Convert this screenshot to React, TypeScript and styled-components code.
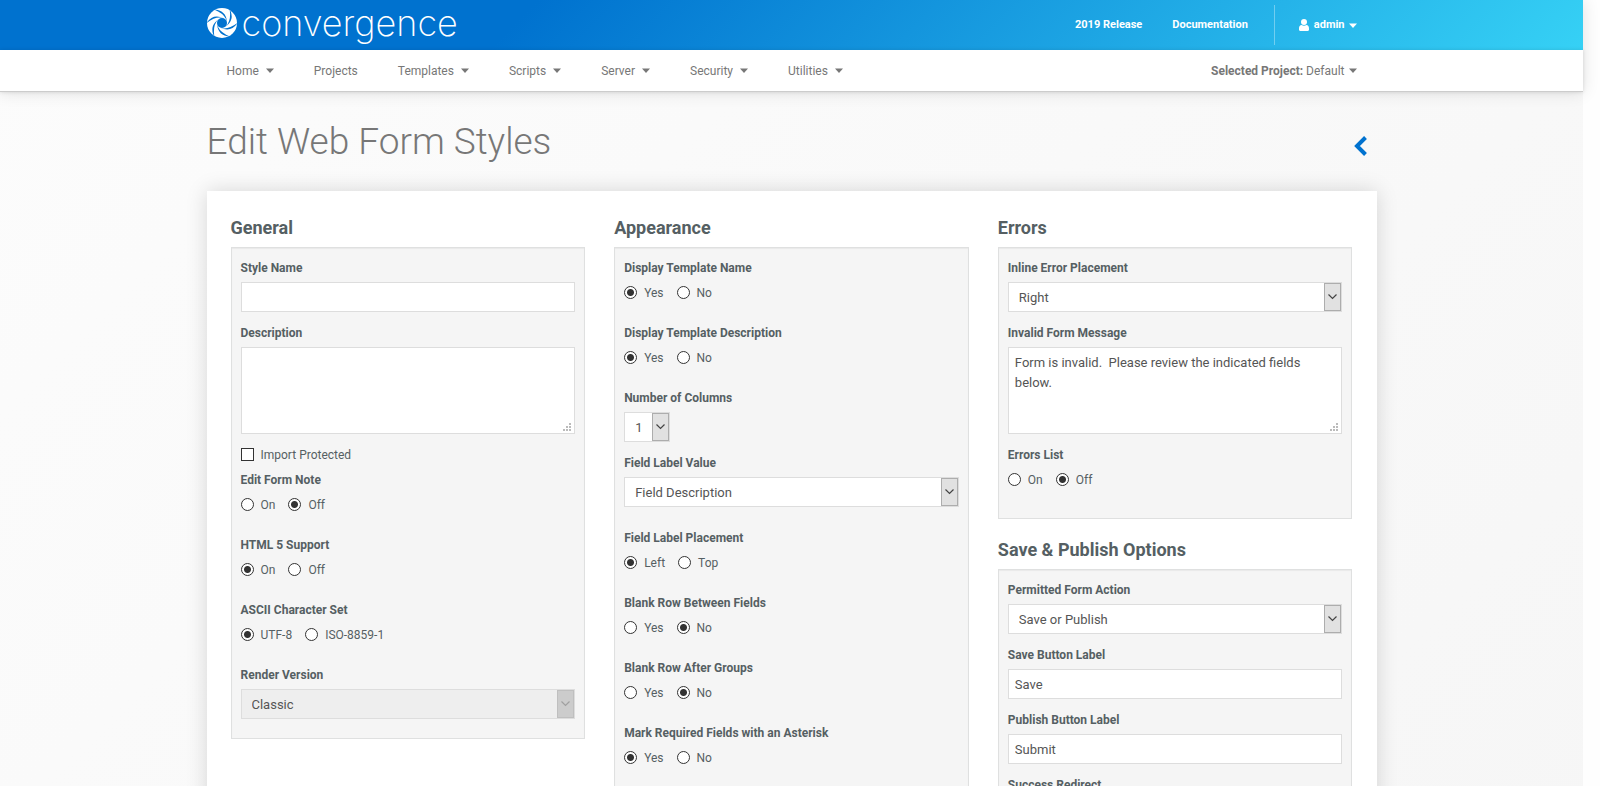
import React, { useId } from 'react';
import styled, { createGlobalStyle } from 'styled-components';

const GlobalStyle = createGlobalStyle`
  *, *::before, *::after { box-sizing: border-box; }
  body {
    margin: 0;
    font-family: Roboto, 'Liberation Sans', sans-serif;
    font-size: 12px;
    line-height: 20px;
    color: #555f63;
  }
  html, body, #root { height: 100%; }
`;

const Viewport = styled.div`
  height: 100vh;
  padding-right: 17px;
  overflow: hidden;
  background: #fefefe;
`;

const Page = styled.div`
  min-height: 100%;
  background: linear-gradient(135deg, #fcfcfc 0%, #f6f6f6 100%);
`;

const Container = styled.div`
  width: 100%;
  max-width: 1170px;
  margin: 0 auto;
`;

const Masthead = styled.header`
  position: relative;
  box-shadow: 0 0 16px rgba(0, 0, 0, 0.12);
`;

const BrandBar = styled.div`
  height: 50px;
  background: linear-gradient(135deg, #0072cf 0%, #0072cf 33%, #36d1f5 100%);
`;

const BrandRow = styled(Container)`
  display: flex;
  align-items: center;
  justify-content: space-between;
  height: 50px;
`;

const Brand = styled.a`
  display: flex;
  align-items: center;
  gap: 5px;
  margin-bottom: 4px;
  color: #fff;
  font-family: Inter, Roboto, sans-serif;
  font-size: 36px;
  font-weight: 200;
  line-height: 40px;
  text-decoration: none;
`;

const AccountLinks = styled.nav`
  display: flex;
  align-items: center;
  padding-right: 20px;
`;

const AccountLink = styled.a`
  margin-right: 30px;
  color: #fff;
  font-size: 11px;
  font-weight: 700;
  text-decoration: none;
`;

const AccountButton = styled.button`
  display: flex;
  align-items: center;
  gap: 4px;
  height: 40px;
  padding: 0 0 0 24px;
  margin-left: -4px;
  border: 0;
  border-left: 1px solid rgba(255, 255, 255, 0.35);
  background: none;
  color: #fff;
  font: 700 11px/20px Roboto, sans-serif;
`;

const NavBar = styled.div`
  height: 42px;
  border-bottom: 1px solid #ccc;
  background: #fff;
  box-shadow: 0 0 4px rgba(0, 0, 0, 0.12);
`;

const NavRow = styled(Container)`
  display: flex;
  align-items: center;
  justify-content: space-between;
  height: 41px;
  padding: 0 20px;
`;

const NavList = styled.nav`
  display: flex;
  gap: 40px;
`;

const NavButton = styled.button<{ $gap?: number }>`
  display: flex;
  align-items: center;
  gap: ${(p) => p.$gap ?? 7}px;
  padding: 0;
  border: 0;
  background: none;
  color: #777;
  font: 400 12px/20px Roboto, sans-serif;
`;

const NavLink = styled.a`
  color: #777;
  text-decoration: none;
`;

const TitleRow = styled(Container)`
  display: flex;
  align-items: center;
  justify-content: space-between;
  height: 99px;
  padding-right: 9px;
`;

const Title = styled.h1`
  margin: 0;
  color: #777;
  font-size: 37px;
  font-weight: 300;
  line-height: 50px;
`;

const BackButton = styled.button`
  display: flex;
  margin-top: 8px;
  padding: 0;
  border: 0;
  background: none;
  color: #0072cf;
`;

const Card = styled.main`
  display: grid;
  grid-template-columns: repeat(3, minmax(0, 1fr));
  align-items: start;
  gap: 29px;
  width: 100%;
  max-width: 1170px;
  margin: 0 auto;
  padding: 27px 24px;
  background: #fff;
  box-shadow: 0 0 20px rgba(0, 0, 0, 0.15);
`;

const Column = styled.div`
  display: grid;
  gap: 21px;
`;

const SectionTitle = styled.h2`
  margin: 0 0 9px;
  color: #555f63;
  font-size: 18px;
  font-weight: 700;
  line-height: 20px;
`;

const Panel = styled.div`
  padding: 10px 9px 8px;
  border: 1px solid #dfe0e0;
  background: #f5f5f5;
  box-shadow: inset 0 1px 1px rgba(0, 0, 0, 0.05);
`;

const Field = styled.div<{ $after?: number }>`
  margin-bottom: ${(p) => p.$after ?? 11}px;
`;

const FieldLabel = styled.label`
  display: block;
  margin-bottom: 4px;
  font-weight: 700;
`;

const ChoiceField = styled.fieldset`
  margin: 0 0 20px;
  padding: 0;
  border: 0;
`;

const Legend = styled.legend`
  margin-bottom: 5px;
  padding: 0;
  font-weight: 700;
`;

const Choices = styled.div`
  display: flex;
  gap: 13px;
`;

const Choice = styled.label`
  display: flex;
  align-items: flex-start;
  gap: 7px;
`;

const CheckLine = styled(Choice)`
  margin-bottom: 5px;
`;

const Tick = styled.input`
  appearance: none;
  flex: none;
  width: 13px;
  height: 13px;
  margin: 3px 0;
  border: 1px solid #333;
  background: #fff;

  &[type='radio'] { border-radius: 50%; }
  &[type='radio']:checked {
    background: radial-gradient(circle, #333 0, #333 3px, #fff 4px);
  }
`;

const TextInput = styled.input`
  display: block;
  width: 100%;
  height: 30px;
  padding: 4px 6px;
  border: 1px solid #ddd;
  border-radius: 0;
  background: #fff;
  color: #555;
  font: 400 13px/20px Roboto, sans-serif;
`;

const AreaFrame = styled.div`
  position: relative;
`;

const Area = styled.textarea`
  display: block;
  width: 100%;
  height: 87px;
  padding: 5px 6px 3px;
  border: 1px solid #ddd;
  border-radius: 0;
  background: #fff;
  color: #555;
  font: 400 13px/20px Roboto, sans-serif;
  resize: none;
`;

const Grip = styled.svg`
  position: absolute;
  right: 4px;
  bottom: 3px;
  pointer-events: none;
`;

const SelectFrame = styled.div<{ $compact?: boolean }>`
  position: relative;
  width: ${(p) => (p.$compact ? '46px' : '100%')};
`;

const SelectBox = styled.select`
  appearance: none;
  display: block;
  width: 100%;
  height: 30px;
  padding: 5px 18px 3px 10px;
  border: 1px solid #ddd;
  border-radius: 0;
  background: #fff;
  color: #555;
  font: 400 13px/20px Roboto, sans-serif;

  &:disabled {
    background: #eee;
    color: #555;
    opacity: 1;
  }
`;

const SelectArrow = styled.span<{ $disabled?: boolean }>`
  position: absolute;
  top: 1px;
  right: 1px;
  bottom: 1px;
  display: flex;
  align-items: center;
  justify-content: center;
  width: 17px;
  border: 1px solid ${(p) => (p.$disabled ? '#bfbfbf' : '#adadad')};
  background: ${(p) => (p.$disabled ? '#ccc' : '#e1e1e1')};
  color: ${(p) => (p.$disabled ? '#a0a0a0' : '#444')};
  pointer-events: none;
`;

const Caret = () => (
  <svg width="8" height="5" viewBox="0 0 8 5" aria-hidden="true">
    <path d="M0 .5h8L4 5z" fill="currentColor" />
  </svg>
);

const Swirl = () => (
  <svg width="30" height="30" viewBox="-15 -15 30 30" aria-hidden="true">
    <circle r="15" fill="#fff" />
    <circle r="5" fill="#0072cf" />
    {[0, 60, 120, 180, 240, 300].map((turn) => (
      <path
        key={turn}
        transform={`rotate(${turn})`}
        d="M-8 -13.500Q4 -13 5 -1L4 -4Q1 -10 -8 -13.500z"
        fill="#0072cf"
      />
    ))}
  </svg>
);

const UserIcon = () => (
  <svg width="11" height="12" viewBox="0 0 11 12" aria-hidden="true">
    <circle cx="5" cy="3" r="3" fill="currentColor" />
    <path d="M0 10.800V9.500C0 7.500 1 6.200 2.600 6.100c1.500 1 3.300 1 4.800 0C9 6.200 10 7.500 10 9.500v1.300c0 .7-.5 1.200-1.200 1.200H1.200C.5 12 0 11.500 0 10.800z" fill="currentColor" />
  </svg>
);

const BackIcon = () => (
  <svg width="14" height="22" viewBox="0 0 14 22" aria-hidden="true">
    <path d="M11.500 2.500L3 11l8.500 8.500" fill="none" stroke="currentColor" strokeWidth="4" />
  </svg>
);

function TextField({ label, value = '' }: { label: string; value?: string }) {
  const id = useId();
  return (
    <Field>
      <FieldLabel htmlFor={id}>{label}</FieldLabel>
      <TextInput id={id} type="text" defaultValue={value} />
    </Field>
  );
}

function AreaField({ label, value = '' }: { label: string; value?: string }) {
  const id = useId();
  return (
    <Field>
      <FieldLabel htmlFor={id}>{label}</FieldLabel>
      <AreaFrame>
        <Area id={id} defaultValue={value} />
        <Grip width="8" height="8" viewBox="0 0 8 8" fill="#bbb" aria-hidden="true">
          <path d="M6 0h2v2H6zM6 3h2v2H6zM6 6h2v2H6zM3 3h2v2H3zM3 6h2v2H3zM0 6h2v2H0z" />
        </Grip>
      </AreaFrame>
    </Field>
  );
}

interface SelectFieldProps {
  label: string;
  value: string;
  compact?: boolean;
  disabled?: boolean;
  after?: number;
}

function SelectField({ label, value, compact, disabled, after }: SelectFieldProps) {
  const id = useId();
  return (
    <Field $after={after}>
      <FieldLabel htmlFor={id}>{label}</FieldLabel>
      <SelectFrame $compact={compact}>
        <SelectBox id={id} disabled={disabled} defaultValue={value}>
          <option>{value}</option>
        </SelectBox>
        <SelectArrow $disabled={disabled} aria-hidden="true">
          <svg width="9" height="6" viewBox="0 0 9 6">
            <path d="M.5.5l4 4 4-4" fill="none" stroke="currentColor" strokeWidth="1.200" />
          </svg>
        </SelectArrow>
      </SelectFrame>
    </Field>
  );
}

function RadioField({ label, options, value }: { label: string; options: string[]; value: string }) {
  const name = useId();
  return (
    <ChoiceField>
      <Legend>{label}</Legend>
      <Choices>
        {options.map((option) => (
          <Choice key={option}>
            <Tick type="radio" name={name} value={option} defaultChecked={option === value} />
            {option}
          </Choice>
        ))}
      </Choices>
    </ChoiceField>
  );
}

const Section = ({ title, children }: { title: string; children: React.ReactNode }) => (
  <section>
    <SectionTitle>{title}</SectionTitle>
    <Panel>{children}</Panel>
  </section>
);

const menus = ['Home', 'Projects', 'Templates', 'Scripts', 'Server', 'Security', 'Utilities'];
const yesNo = ['Yes', 'No'];
const onOff = ['On', 'Off'];

export default function App() {
  return (
    <Viewport>
      <GlobalStyle />
      <Page>
        <Masthead>
          <BrandBar>
            <BrandRow>
              <Brand href="#">
                <Swirl />
                convergence
              </Brand>
              <AccountLinks>
                <AccountLink href="#">2019 Release</AccountLink>
                <AccountLink href="#">Documentation</AccountLink>
                <AccountButton>
                  <UserIcon />
                  admin
                  <Caret />
                </AccountButton>
              </AccountLinks>
            </BrandRow>
          </BrandBar>
          <NavBar>
            <NavRow>
              <NavList>
                {menus.map((menu) =>
                  menu === 'Projects' ? (
                    <NavLink key={menu} href="#">{menu}</NavLink>
                  ) : (
                    <NavButton key={menu}>
                      {menu}
                      <Caret />
                    </NavButton>
                  ),
                )}
              </NavList>
              <NavButton $gap={4}>
                <span>
                  <strong>Selected Project:</strong> Default
                </span>
                <Caret />
              </NavButton>
            </NavRow>
          </NavBar>
        </Masthead>
        <TitleRow>
          <Title>Edit Web Form Styles</Title>
          <BackButton aria-label="Back">
            <BackIcon />
          </BackButton>
        </TitleRow>
        <Card>
          <Column>
            <Section title="General">
              <TextField label="Style Name" />
              <AreaField label="Description" />
              <CheckLine>
                <Tick type="checkbox" />
                Import Protected
              </CheckLine>
              <RadioField label="Edit Form Note" options={onOff} value="Off" />
              <RadioField label="HTML 5 Support" options={onOff} value="On" />
              <RadioField label="ASCII Character Set" options={['UTF-8', 'ISO-8859-1']} value="UTF-8" />
              <SelectField label="Render Version" value="Classic" disabled />
            </Section>
          </Column>
          <Column>
            <Section title="Appearance">
              <RadioField label="Display Template Name" options={yesNo} value="Yes" />
              <RadioField label="Display Template Description" options={yesNo} value="Yes" />
              <SelectField label="Number of Columns" value="1" compact />
              <SelectField label="Field Label Value" value="Field Description" after={21} />
              <RadioField label="Field Label Placement" options={['Left', 'Top']} value="Left" />
              <RadioField label="Blank Row Between Fields" options={yesNo} value="No" />
              <RadioField label="Blank Row After Groups" options={yesNo} value="No" />
              <RadioField label="Mark Required Fields with an Asterisk" options={yesNo} value="Yes" />
            </Section>
          </Column>
          <Column>
            <Section title="Errors">
              <SelectField label="Inline Error Placement" value="Right" />
              <AreaField
                label="Invalid Form Message"
                value="Form is invalid.  Please review the indicated fields below."
              />
              <RadioField label="Errors List" options={onOff} value="Off" />
            </Section>
            <Section title="Save &amp; Publish Options">
              <SelectField label="Permitted Form Action" value="Save or Publish" />
              <TextField label="Save Button Label" value="Save" />
              <TextField label="Publish Button Label" value="Submit" />
              <TextField label="Success Redirect" />
            </Section>
          </Column>
        </Card>
      </Page>
    </Viewport>
  );
}
